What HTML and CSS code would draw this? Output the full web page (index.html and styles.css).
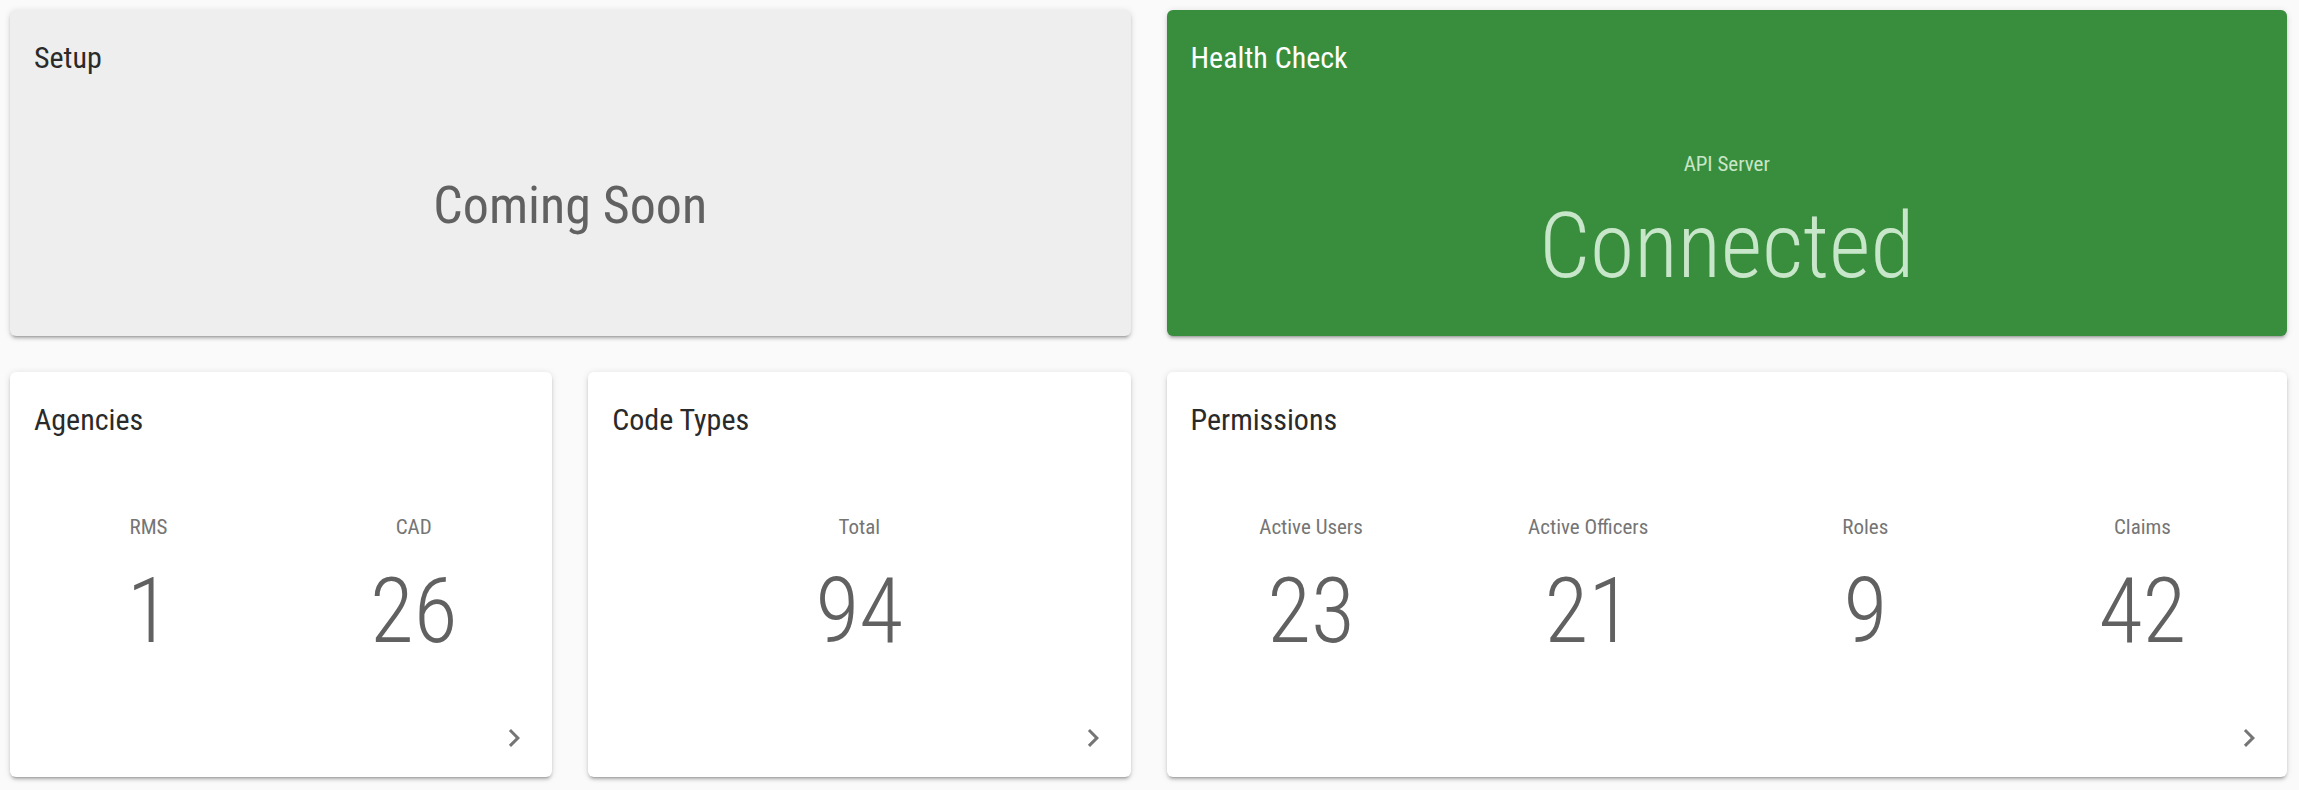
FILE: index.html
```html
<!DOCTYPE html>
<html lang="en">
<head>
<meta charset="utf-8">
<title>Dashboard</title>
<link rel="stylesheet" href="styles.css">
</head>
<body>
<main class="dashboard">
  <section class="card card-wide card-setup">
    <h2 class="card-title">Setup</h2>
    <div class="card-body center">
      <div class="coming">Coming Soon</div>
    </div>
  </section>
  <section class="card card-wide card-health">
    <h2 class="card-title">Health Check</h2>
    <div class="card-body health-body">
      <div class="health-label">API Server</div>
      <div class="health-value">Connected</div>
    </div>
  </section>

  <section class="card card-stat">
    <h2 class="card-title">Agencies</h2>
    <div class="stats">
      <div class="stat"><div class="stat-label">RMS</div><div class="stat-value">1</div></div>
      <div class="stat"><div class="stat-label">CAD</div><div class="stat-value">26</div></div>
    </div>
    <div class="card-actions">
      <svg class="chevron" viewBox="0 0 24 24"><path d="M8.59,16.58L13.17,12L8.59,7.41L10,6L16,12L10,18L8.59,16.58Z"/></svg>
    </div>
  </section>
  <section class="card card-stat">
    <h2 class="card-title">Code Types</h2>
    <div class="stats">
      <div class="stat"><div class="stat-label">Total</div><div class="stat-value">94</div></div>
    </div>
    <div class="card-actions">
      <svg class="chevron" viewBox="0 0 24 24"><path d="M8.59,16.58L13.17,12L8.59,7.41L10,6L16,12L10,18L8.59,16.58Z"/></svg>
    </div>
  </section>
  <section class="card card-stat card-wide">
    <h2 class="card-title">Permissions</h2>
    <div class="stats">
      <div class="stat"><div class="stat-label">Active Users</div><div class="stat-value">23</div></div>
      <div class="stat"><div class="stat-label">Active Officers</div><div class="stat-value">21</div></div>
      <div class="stat"><div class="stat-label">Roles</div><div class="stat-value">9</div></div>
      <div class="stat"><div class="stat-label">Claims</div><div class="stat-value">42</div></div>
    </div>
    <div class="card-actions">
      <svg class="chevron" viewBox="0 0 24 24"><path d="M8.59,16.58L13.17,12L8.59,7.41L10,6L16,12L10,18L8.59,16.58Z"/></svg>
    </div>
  </section>
</main>
</body>
</html>
```
FILE: styles.css
```css
html, body {
  margin: 0;
  padding: 0;
  background: #fafafa;
}
body {
  font-family: Roboto, "Liberation Sans", sans-serif;
  font-stretch: 87%;
  color: rgba(0, 0, 0, 0.87);
}
.dashboard {
  display: grid;
  grid-template-columns: repeat(4, 1fr);
  grid-template-rows: 326px 405px;
  gap: 36px;
  padding: 10px 12px 10px 10px;
}
.card {
  display: flex;
  flex-direction: column;
  background: #fff;
  border-radius: 6px;
  box-shadow: 0 4px 2px -3px rgba(0,0,0,.2), 0 3px 3px 0 rgba(0,0,0,.14), 0 1px 7px 0 rgba(0,0,0,.12);
  min-width: 0;
}
.card-wide {
  grid-column: span 2;
}
.card-setup {
  background: #eeeeee;
}
.card-health {
  background: #388e3c;
}
.card-title {
  margin: 0;
  padding: 24px 24px 0;
  font-size: 30px;
  line-height: 48px;
  font-weight: 400;
  color: #2a2a2a;
}
.card-health .card-title {
  color: #fff;
}
.card-body {
  flex: 1;
  display: flex;
  flex-direction: column;
  align-items: center;
  justify-content: center;
  padding-bottom: 6px;
}
.health-body {
  padding-top: 28px;
  padding-bottom: 0;
}
.coming {
  font-size: 52px;
  line-height: 60px;
  font-weight: 400;
  color: #616161;
}
.health-label {
  font-size: 21px;
  line-height: 30px;
  color: #c8e6c9;
}
.health-value {
  font-size: 90px;
  line-height: 100px;
  font-weight: 300;
  color: #c8e6c9;
  margin-top: 18px;
}
.stats {
  display: flex;
  padding: 68px 6px 0;
}
.stat {
  flex: 1;
  text-align: center;
}
.stat-label {
  font-size: 21px;
  line-height: 30px;
  font-weight: 400;
  color: #757575;
}
.stat-value {
  margin-top: 25px;
  font-size: 90px;
  line-height: 90px;
  font-weight: 300;
  color: #616161;
}
.card-actions {
  margin-top: auto;
  display: flex;
  justify-content: flex-end;
  padding: 0 20px 21px;
}
.chevron {
  width: 36px;
  height: 36px;
  fill: #757575;
}
```
